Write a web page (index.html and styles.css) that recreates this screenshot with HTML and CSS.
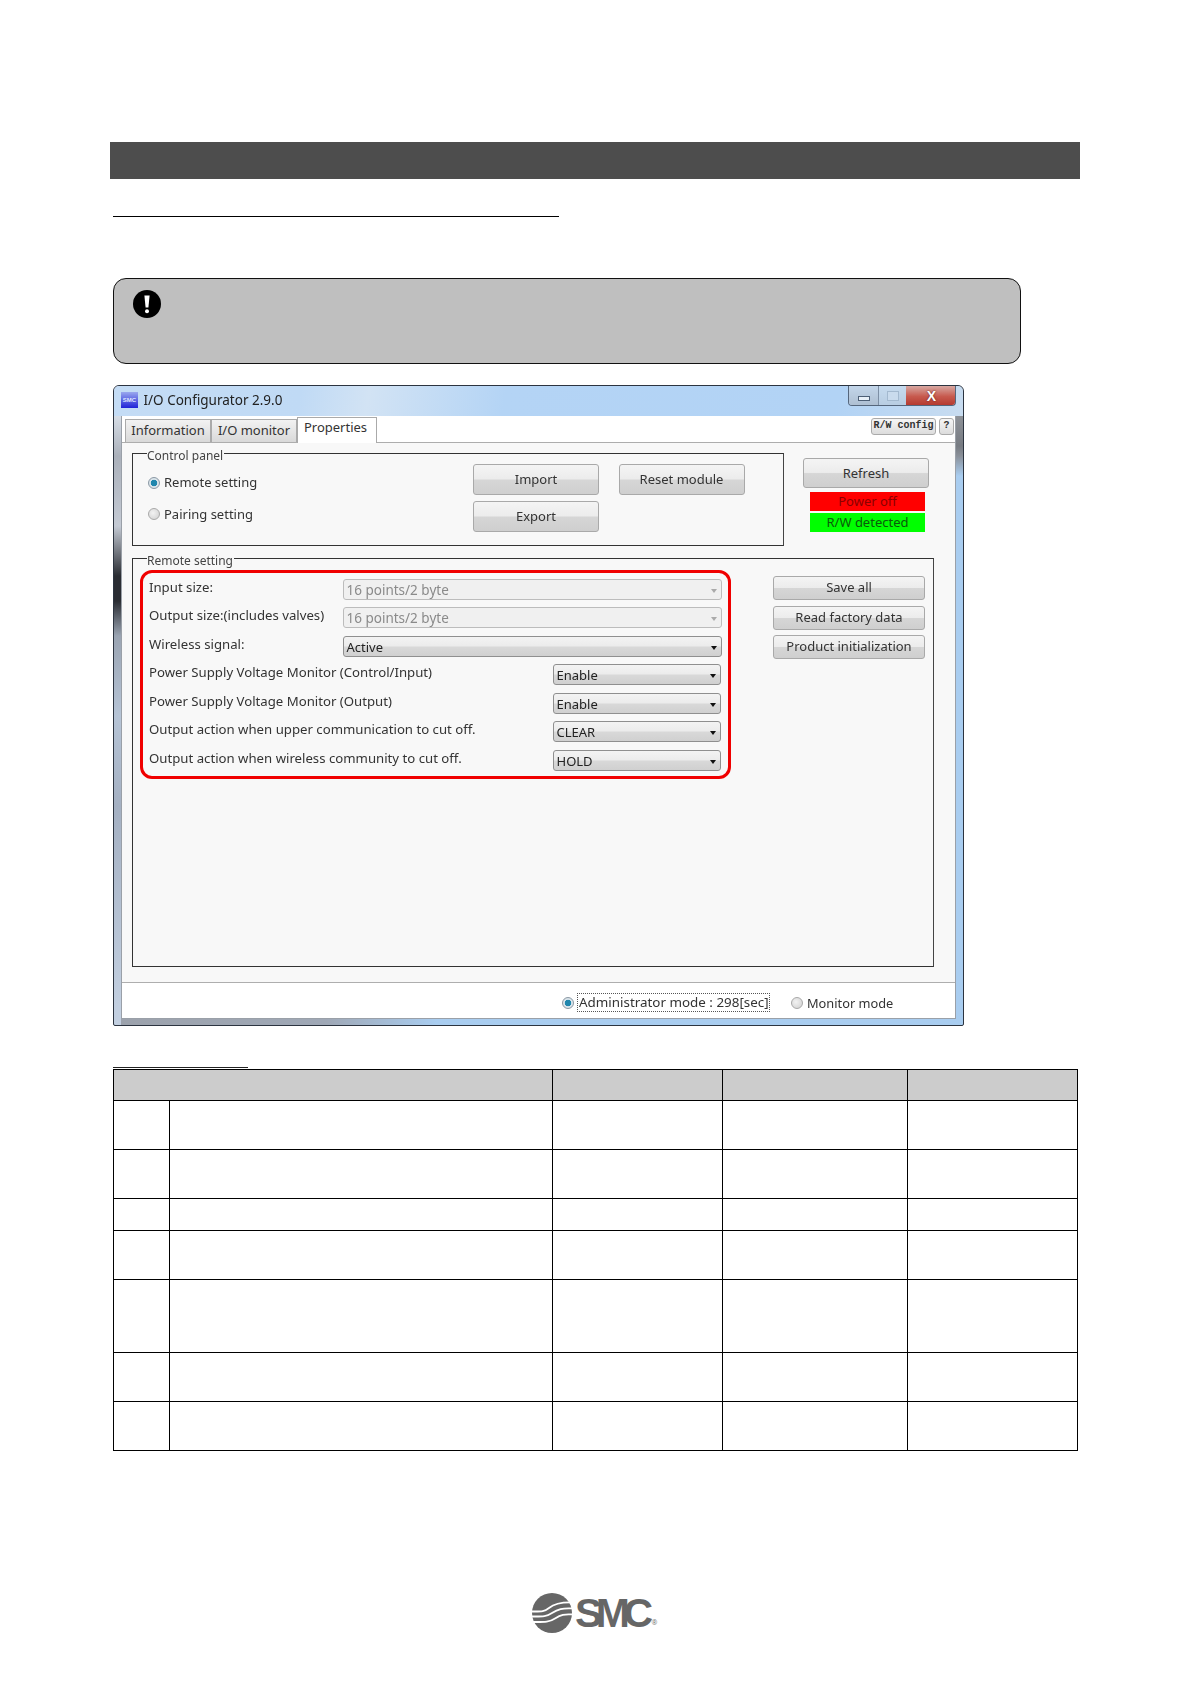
FILE: index.html
```html
<!DOCTYPE html>
<html lang="en">
<head>
<meta charset="utf-8">
<title>I/O Configurator</title>
<link rel="stylesheet" href="styles.css">
</head>
<body>
<div class="page">
  <div class="banner"></div>
  <div class="rule rule-long"></div>
  <div class="callout">
    <svg class="callout-icon" viewBox="0 0 28 28" width="28" height="28"><circle cx="14" cy="14" r="14" fill="#000"/><path d="M11.4 5.5h5.2l-1.2 12h-2.8z" fill="#fff"/><circle cx="14" cy="21.3" r="2" fill="#fff"/></svg>
  </div>

  <div class="win">
    <div class="titlebar">
      <svg class="app-icon" viewBox="0 0 17 16" width="17" height="16"><defs><linearGradient id="ai" x1="0" y1="0" x2="0" y2="1"><stop offset="0" stop-color="#9aa8ee"/><stop offset="1" stop-color="#1f22d8"/></linearGradient></defs><rect width="17" height="16" fill="url(#ai)"/><text x="8.5" y="10" font-size="6" font-family="Liberation Sans" font-weight="700" text-anchor="middle" fill="#dfe6ff">SMC</text></svg>
      <span class="title-text">I/O Configurator 2.9.0</span>
      <div class="wctrl">
        <div class="wbtn wmin"><span class="min-glyph"></span></div>
        <div class="wbtn wmax"><span class="max-glyph"></span></div>
        <div class="wbtn wclose">X</div>
      </div>
    </div>
    <div class="client">
      <div class="main">
        <div class="tabs">
          <div class="tab">Information</div>
          <div class="tab">I/O monitor</div>
          <div class="tab tab-active">Properties</div>
          <div class="tab-tools">
            <div class="tool tool-rw">R/W config</div>
            <div class="tool tool-q">?</div>
          </div>
        </div>
        <div class="panel">
          <div class="top-row">
            <div class="group group-control">
              <span class="legend">Control panel</span>
              <div class="radio-col">
                <div class="radio-row"><span class="radio on"></span><span>Remote setting</span></div>
                <div class="radio-row"><span class="radio"></span><span>Pairing setting</span></div>
              </div>
              <div class="btn-grid">
                <div class="btn">Import</div>
                <div class="btn">Reset module</div>
                <div class="btn">Export</div>
              </div>
            </div>
            <div class="status-col">
              <div class="btn btn-refresh">Refresh</div>
              <div class="status st-red">Power off</div>
              <div class="status st-green">R/W detected</div>
            </div>
          </div>
          <div class="group group-remote">
            <span class="legend">Remote setting</span>
            <div class="redbox">
              <div class="frow"><span class="flabel">Input size:</span><div class="sel sel-wide sel-off">16 points/2 byte</div></div>
              <div class="frow"><span class="flabel">Output size:(includes valves)</span><div class="sel sel-wide sel-off">16 points/2 byte</div></div>
              <div class="frow"><span class="flabel">Wireless signal:</span><div class="sel sel-wide">Active</div></div>
              <div class="frow"><span class="flabel">Power Supply Voltage Monitor (Control/Input)</span><div class="sel sel-narrow">Enable</div></div>
              <div class="frow"><span class="flabel">Power Supply Voltage Monitor (Output)</span><div class="sel sel-narrow">Enable</div></div>
              <div class="frow"><span class="flabel">Output action when upper communication to cut off.</span><div class="sel sel-narrow">CLEAR</div></div>
              <div class="frow"><span class="flabel">Output action when wireless community to cut off.</span><div class="sel sel-narrow">HOLD</div></div>
            </div>
            <div class="side-btns">
              <div class="btn btn-side">Save all</div>
              <div class="btn btn-side">Read factory data</div>
              <div class="btn btn-side">Product initialization</div>
            </div>
          </div>
        </div>
      </div>
      <div class="footer">
        <span class="radio on"></span>
        <span class="mode-focus">Administrator mode : 298[sec]</span>
        <span class="radio radio-monitor"></span>
        <span class="mode-label">Monitor mode</span>
      </div>
    </div>
  </div>

  <div class="rule rule-short"></div>
  <table class="spec">
    <colgroup><col class="c1"><col class="c2"><col class="c3"><col class="c4"><col class="c5"></colgroup>
    <tr class="r-head"><th colspan="2"></th><th></th><th></th><th></th></tr>
    <tr class="r-m"><td></td><td></td><td></td><td></td><td></td></tr>
    <tr class="r-m"><td></td><td></td><td></td><td></td><td></td></tr>
    <tr class="r-s"><td></td><td></td><td></td><td></td><td></td></tr>
    <tr class="r-m"><td></td><td></td><td></td><td></td><td></td></tr>
    <tr class="r-l"><td></td><td></td><td></td><td></td><td></td></tr>
    <tr class="r-m"><td></td><td></td><td></td><td></td><td></td></tr>
    <tr class="r-m"><td></td><td></td><td></td><td></td><td></td></tr>
  </table>

  <div class="logo">
    <svg class="logo-mark" viewBox="0 0 40 40" width="40" height="40">
      <circle cx="20" cy="20" r="20" fill="#666"/>
      <path d="M-1 18.5C9 18.5 12 19 17 15S28 9 41 9.500M-1 23.500C10 23.500 14 24 20 20S30 15 41 15.500M-1 29C12 29 17 29.500 23 25.500S32 21 41 21.500" fill="none" stroke="#fff" stroke-width="1.800"/>
    </svg>
    <span class="logo-text">SMC</span><span class="logo-reg">®</span>
  </div>
</div>
</body>
</html>
```

FILE: styles.css
```css
* { box-sizing: border-box; }
html, body { margin: 0; padding: 0; background: #fff; }
body { font-family: "Noto Sans", "Open Sans", sans-serif; font-size: 13px; color: #333; }
.page { width: 1191px; height: 1684px; padding: 142px 0 0 110px; overflow: hidden; }

.banner { width: 970px; height: 37px; background: #4d4d4d; }
.rule { background: #000; height: 1px; margin-left: 3px; }
.rule-long { width: 446px; margin-top: 37px; }
.rule-short { width: 135px; height: 1px; margin-top: 41px; background: #222; }

.callout { margin: 61px 0 0 3px; width: 908px; height: 86px; background: #bfbfbf; border: 1.5px solid #111; border-radius: 13px; padding: 10.5px 18.500px; }
.callout-icon { display: block; }

.win { margin: 21px 0 0 3px; width: 851px; height: 641px; border: 1px solid #2c3440; border-radius: 6px 6px 2px 2px; overflow: hidden; filter: blur(0.3px);
  background:
    linear-gradient(180deg, #8e9298 30px, #777b82 60px, #8a9099 70px, #a9cdf0 90px) right 0 top 0 / 7px 100% no-repeat,
    linear-gradient(180deg, #d6dde6 30px, #aab0ba 70px, #c4cad4 140px, #2a2d33 190px, #2a2d33 215px, #9aa4b2 250px, #b6c4d6 330px, #a4b0c2 420px, #c2cfe0 620px) left 0 top 0 / 7px 100% no-repeat,
    linear-gradient(90deg, #9ca2ac 0, #9fa8b6 25%, #a9cdf0 38%, #a9cdf0 100%);
}
.titlebar { height: 30px; display: flex; align-items: flex-start; padding-left: 7px;
  background: linear-gradient(100deg, #c4dcf5 0, #c0daf5 22%, #d2e3f4 30%, #b4d4f5 46%, #b2d3f5 85%, #c8dcf0 100%); }
.app-icon { margin-top: 6px; }
.title-text { margin: 5px 0 0 5.500px; font-size: 13.500px; line-height: 19px; color: #222; }
.wctrl { margin-left: auto; margin-right: 7px; display: flex; height: 20px; border: 1px solid #55667c; border-top: 0; border-radius: 0 0 4px 4px; overflow: hidden; }
.wbtn { display: flex; align-items: center; justify-content: center; }
.wmin { width: 30px; background: linear-gradient(180deg, #c3d6ea, #aebfd2); border-right: 1px solid #7d8fa5; }
.wmax { width: 27px; background: linear-gradient(180deg, #c6dbef, #b8cde2); }
.wclose { width: 49px; padding-left: 2px; background: linear-gradient(180deg, #d8a8a2 0, #c75a4e 55%, #b53a30 100%); color: #fff; font: 700 14px/1 "Liberation Sans", sans-serif; text-shadow: 0 0 2px #5a1810; }
.min-glyph { width: 12px; height: 5px; margin-top: 6px; background: #e8f0f8; border: 1px solid #4d5f76; }
.max-glyph { width: 12px; height: 10px; border: 1px solid #a3b9cf; background: #c9dbed; }

.client { margin: 0 7px; display: flex; flex-direction: column; width: 835px; height: 603px; border: 1px solid #9aa0a8; border-top: 0; background: #fff; }
.main { height: 566px; background: #fff; }
.tabs { height: 27px; display: flex; align-items: flex-end; padding-left: 3px; border-bottom: 1px solid #adadad; }
.tab { height: 23px; padding: 0; text-align: center; line-height: 20px; font-size: 13px; color: #333; background: linear-gradient(180deg, #f2f2f2, #d9d9d9); border: 1px solid #aaa; border-bottom: 0; width: 86px; white-space: nowrap; }
.tab-active { width: 80px; height: 26px; margin-bottom: -1px; padding: 0 3px 0 0; line-height: 19px; background: #fff; }
.tab-tools { margin-left: auto; display: flex; gap: 3px; align-self: flex-start; margin-top: 2px; padding-right: 1px; }
.tool { height: 17px; border: 1px solid #aaa; border-radius: 3px; background: linear-gradient(180deg, #f6f6f6, #dcdcdc); font: 700 10px/14px "Liberation Mono", monospace; color: #333; text-align: center; }
.tool-rw { width: 65px; }
.tool-q { width: 15px; }

.panel { height: 539px; background: #f8f8f8; padding: 10px 0 0 10px; }
.top-row { display: flex; align-items: flex-start; }
.group { position: relative; border: 1px solid #333; border-right-color: #444; }
.legend { position: absolute; left: 14px; top: -5px; padding: 0 1px 0 0; line-height: 14px; font-size: 12px; background: #f8f8f8; color: #444; }
.group-control { width: 652px; height: 93px; display: flex; padding: 10px 0 0 15px; }
.radio-col { width: 325px; padding-top: 3px; }
.radio-row { display: flex; align-items: center; height: 31px; gap: 4px; font-size: 13px; color: #333; }
.radio-row:first-child span:last-child { margin-top: -1px; }
.radio { flex: none; display: inline-block; width: 12px; height: 12px; border-radius: 50%; border: 1px solid #a8a8a8; background: radial-gradient(circle at 40% 40%, #f2f2f2, #cfcfcf); }
.radio.on { background: radial-gradient(circle, #1f86ad 0, #1f86ad 3px, #dfe8ee 3.6px, #cfd8de 100%); border-color: #8a98a4; }
.btn-grid { display: grid; grid-template-columns: 126px 126px; grid-auto-rows: 31px; gap: 6px 19.500px; }
.btn { display: flex; align-items: center; justify-content: center; padding-bottom: 2px; border: 1px solid #a9a9a9; border-radius: 3px; font-size: 13px; color: #333;
  background: linear-gradient(180deg, #f4f4f4 0, #ececec 48%, #d6d6d6 52%, #cfcfcf 100%); }
.status-col { width: 126px; margin: 5px 0 0 19px; display: flex; flex-direction: column; }
.btn-refresh { height: 30px; margin-bottom: 4px; padding-bottom: 0; }
.status { height: 19px; margin: 0 4px 2px 7px; line-height: 18px; text-align: center; font-size: 13px; color: #222; }
.st-red { background: #f00; color: #8a0000; }
.st-green { background: #0f0; color: #0a5a0a; }

.group-remote { margin-top: 12px; width: 802px; height: 409px; display: flex; align-items: flex-start; padding: 11px 0 0 7px; }
.redbox { width: 591px; height: 209px; flex: none; border: 3.500px solid #f00000; border-radius: 12px; padding: 5.500px 6.500px 0 5.500px; display: grid; grid-auto-rows: 21px; row-gap: 7.5px; }
.frow { display: flex; align-items: flex-start; }
.flabel { line-height: 17px; font-size: 13.200px; color: #333; white-space: nowrap; margin-left: 0.5px; }
.sel { position: relative; margin-left: auto; height: 21px; padding: 1px 0 0 3px; line-height: 19px; font-size: 13px; color: #222; border: 1px solid #8f8f8f; border-radius: 3px; background: linear-gradient(180deg, #f3f3f3 0, #ececec 45%, #d8d8d8 55%, #d0d0d0 100%); }
.sel::after { content: ""; position: absolute; right: 4px; top: 9px; border: 3.500px solid transparent; border-top: 4px solid #111; border-bottom: 0; }
.sel-wide { width: 379px; }
.sel-narrow { width: 168px; margin-right: 1px; }
.sel-off { background: #f0f0f0; border-color: #bcbcbc; color: #8a8a8a; font-size: 13.500px; }
.sel-off::after { border-top-color: #aaa; }

.side-btns { margin: 6px 0 0 42px; width: 152px; display: grid; grid-auto-rows: 24px; row-gap: 5.500px; }

.footer { flex: 1; display: flex; align-items: center; background: #fff; border-top: 1px solid #aeaeae; padding: 4px 0 0 440px; font-size: 13px; color: #333; }
.mode-focus { margin-left: 3px; width: 193px; height: 19px; line-height: 17px; font-size: 13.400px; border: 1px dotted #555; padding-left: 1px; white-space: nowrap; overflow: hidden; }
.radio-monitor { margin-left: 21px; }
.mode-label { margin-left: 4px; font-size: 12.800px; }

.spec { margin: 1px 0 0 3px; width: 964px; border-collapse: collapse; table-layout: fixed; }
.spec th, .spec td { border: 1px solid #000; padding: 0; }
.spec th { background: #ccc; }
.c1 { width: 56px; } .c2 { width: 383px; } .c3 { width: 170px; } .c4 { width: 185px; } .c5 { width: 170px; }
.r-head { height: 31px; } .r-m { height: 49px; } .r-s { height: 32px; } .r-l { height: 73px; }

.logo { margin: 142px 0 0 422px; display: flex; align-items: flex-start; height: 40px; }
.logo-mark { flex: none; }
.logo-text { margin-left: 3px; font: 700 41px/40px "Liberation Sans", sans-serif; letter-spacing: -6.500px; color: #666; }
.logo-reg { margin: 26px 0 0 5px; font-size: 7px; line-height: 8px; color: #777; }
```
